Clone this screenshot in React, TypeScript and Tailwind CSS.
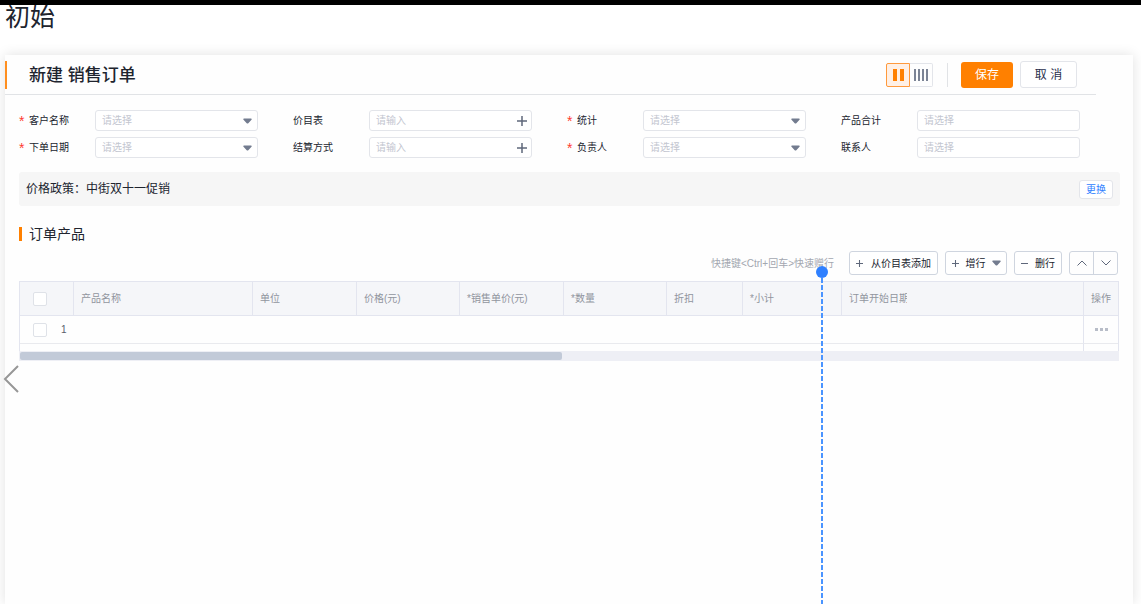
import { useState } from "react";

type Field = {
  id: string;
  label: string;
  required?: boolean;
  kind: "select" | "lookup" | "text";
  placeholder: string;
};

type Column = {
  key: string;
  title: string;
  width: string;
  clip?: boolean;
};

const fields: Field[] = [
  { id: "customer", label: "客户名称", required: true, kind: "select", placeholder: "请选择" },
  { id: "priceList", label: "价目表", kind: "lookup", placeholder: "请输入" },
  { id: "stats", label: "统计", required: true, kind: "select", placeholder: "请选择" },
  { id: "total", label: "产品合计", kind: "text", placeholder: "请选择" },
  { id: "orderDate", label: "下单日期", required: true, kind: "select", placeholder: "请选择" },
  { id: "settlement", label: "结算方式", kind: "lookup", placeholder: "请输入" },
  { id: "owner", label: "负责人", required: true, kind: "select", placeholder: "请选择" },
  { id: "contact", label: "联系人", kind: "text", placeholder: "请选择" },
];

const columns: Column[] = [
  { key: "name", title: "产品名称", width: "w-[179px]" },
  { key: "unit", title: "单位", width: "w-[104px]" },
  { key: "price", title: "价格(元)", width: "w-[103px]" },
  { key: "salePrice", title: "*销售单价(元)", width: "w-[104px]" },
  { key: "quantity", title: "*数量", width: "w-[103px]" },
  { key: "discount", title: "折扣", width: "w-[76px]" },
  { key: "subtotal", title: "*小计", width: "w-[99px]" },
  { key: "startDate", title: "订单开始日期", width: "w-auto", clip: true },
];

function Caret({ className }: { className?: string }) {
  return (
    <svg viewBox="0 0 9 6" className={`h-[6px] w-[9px] fill-[#737c8f] ${className ?? ""}`} aria-hidden="true">
      <path d="M1 .5h7c.7 0 1 .8.5 1.300L5.300 5.200a1.100 1.100 0 0 1-1.600 0L.5 1.800C0 1.300.3.5 1 .5z" />
    </svg>
  );
}

function Plus({ className }: { className?: string }) {
  return (
    <svg viewBox="0 0 10 10" className={className} fill="none" stroke="#5f687b" aria-hidden="true">
      <path d="M5 0v10M0 5h10" strokeWidth="1.500" />
    </svg>
  );
}

function FormField({ field }: { field: Field }) {
  const control =
    "block h-[21px] w-full appearance-none rounded-[3px] border border-[#e3e5ea] bg-white px-1.5 text-[10px] leading-[19px] outline-none placeholder:text-[#c3c6d0]";

  return (
    <div className="flex items-center pr-[35px]">
      <label htmlFor={field.id} className="flex w-[76px] shrink-0 items-center text-[10px] leading-[14px] text-[#20242e]">
        {field.required ? (
          <span className="w-[10px] text-[14px] leading-[10px] text-[#ff3b30]">*</span>
        ) : null}
        {field.label}
      </label>
      <div className="relative min-w-0 flex-1">
        {field.kind === "select" ? (
          <>
            <select id={field.id} defaultValue="" className={`${control} text-[#c3c6d0]`}>
              <option value="">{field.placeholder}</option>
            </select>
            <Caret className="pointer-events-none absolute top-2 right-1.5" />
          </>
        ) : (
          <input id={field.id} placeholder={field.placeholder} className={`${control} text-[#2a304d]`} />
        )}
        {field.kind === "lookup" ? (
          <button
            type="button"
            aria-label={`选择${field.label}`}
            className="absolute top-[5px] right-[5px] flex size-[11px] items-center justify-center"
          >
            <Plus className="size-[10px]" />
          </button>
        ) : null}
      </div>
    </div>
  );
}

function Toolbar() {
  const button =
    "flex h-6 items-center rounded-[3px] border border-[#cfd5df] bg-white text-[10px] text-[#20242e]";

  return (
    <div className="flex items-center justify-end gap-[7px] pr-[2px]">
      <span className="mr-2 text-[10px] text-[#a3a7b0]">快捷键&lt;Ctrl+回车&gt;快速赠行</span>
      <button className={`${button} w-[89px] justify-between px-1.5`}>
        <Plus className="size-[7px]" />
        从价目表添加
      </button>
      <button className={`${button} w-[62px] justify-between pr-[5px] pl-1.5`}>
        <Plus className="size-[7px]" />
        增行
        <Caret />
      </button>
      <button className={`${button} w-[48px] justify-between px-1.5`}>
        <span className="h-px w-[7px] bg-[#5f687b]" />
        删行
      </button>
      <div className="flex h-6 w-[49px] divide-x divide-[#cfd5df] rounded-[3px] border border-[#cfd5df]">
        <button aria-label="上移" className="flex flex-1 items-center justify-center">
          <svg viewBox="0 0 10 6" className="h-[6px] w-[10px]" fill="none" stroke="#5f687b">
            <path d="M.5 5.500 5 1l4.500 4.500" />
          </svg>
        </button>
        <button aria-label="下移" className="flex flex-1 items-center justify-center">
          <svg viewBox="0 0 10 6" className="h-[6px] w-[10px]" fill="none" stroke="#5f687b">
            <path d="M.5.5 5 5 9.500.5" />
          </svg>
        </button>
      </div>
    </div>
  );
}

function CheckBox({ label }: { label: string }) {
  return (
    <input
      type="checkbox"
      aria-label={label}
      className="block size-[14px] appearance-none rounded-[2px] border border-[#dfe2e8] bg-white checked:bg-[#ff8000]"
    />
  );
}

function ProductTable() {
  return (
    <div className="mt-1.5 mr-[1px]">
      <table className="w-full table-fixed border-separate border-spacing-0 border-x border-[#e3e5ef] text-left text-[10px]">
        <thead>
          <tr className="h-[35px] bg-[#f5f6f9] text-[#91959e]">
            <th className="w-[54px] border-y border-r border-[#e3e5ef] pl-[13px]">
              <CheckBox label="全选" />
            </th>
            {columns.map((col) => (
              <th key={col.key} className={`${col.width} border-y border-r border-[#e3e5ef] px-[7px] font-normal`}>
                <span className={col.clip ? "block w-[58px] overflow-hidden whitespace-nowrap" : "block whitespace-nowrap"}>
                  {col.title}
                </span>
              </th>
            ))}
            <th className="w-[34px] border-y border-[#e3e5ef] text-center font-normal">操作</th>
          </tr>
        </thead>
        <tbody>
          <tr className="h-[28px]">
            <td className="border-b border-[#e9eaee] pl-[13px] text-[#5a5f6b]">
              <div className="flex items-center gap-[14px]">
                <CheckBox label="选择第 1 行" />1
              </div>
            </td>
            {columns.map((col) => (
              <td
                key={col.key}
                className={`border-b border-[#e9eaee] ${col.key === "startDate" ? "border-r border-r-[#e3e5ef]" : ""}`}
              />
            ))}
            <td className="border-b border-[#e9eaee]">
              <button aria-label="更多操作" className="mx-auto flex gap-[2px]">
                <span className="size-[3px] bg-[#b8bdc8]" />
                <span className="size-[3px] bg-[#b8bdc8]" />
                <span className="size-[3px] bg-[#b8bdc8]" />
              </button>
            </td>
          </tr>
          <tr className="h-[7px]">
            <td colSpan={columns.length + 1} className="border-r border-[#e3e5ef]" />
            <td />
          </tr>
        </tbody>
      </table>
      <div className="h-[10px] bg-[#eeeff5] px-px py-[1px]">
        <div className="h-2 w-[49.400%] rounded-[2px] bg-[#c2cad8]" />
      </div>
    </div>
  );
}

export default function App() {
  const [layout, setLayout] = useState<"wide" | "dense">("wide");

  return (
    <div className="relative flex min-h-screen flex-col overflow-hidden border-t-[5px] border-black bg-white font-['Liberation_Sans','Noto_Sans_CJK_SC',sans-serif]">
      <h1 className="h-[50px] pl-[5px] text-[25px] leading-[24px] text-[#20242e]">初始</h1>

      <main className="relative mr-2 ml-[5px] flex-1 bg-[#fefefe] shadow-[0_0_12px_rgba(0,0,0,0.12)]">
        <header className="mr-[37px] flex h-10 items-center border-b border-[#e1e3e6] pr-[19px]">
          <div className="h-7 w-[2px] bg-[#ff8f1f]" />
          <h2 className="ml-[22px] flex-1 pt-[2px] text-[17px] font-medium text-[#20242e]">新建 销售订单</h2>
          <div className="flex h-6">
            <button
              aria-label="宽松布局"
              aria-pressed={layout === "wide"}
              onClick={() => setLayout("wide")}
              className="flex w-6 items-center justify-center gap-[3px] rounded-l-[2px] border border-[#ff9a3d] bg-[#fff0e5]"
            >
              <span className="h-3 w-1 bg-[#ff8000]" />
              <span className="h-3 w-1 bg-[#ff8000]" />
            </button>
            <button
              aria-label="紧凑布局"
              aria-pressed={layout === "dense"}
              onClick={() => setLayout("dense")}
              className="flex w-[23px] items-center justify-center gap-[2px] rounded-r-[2px] border border-l-0 border-[#e3e5ea]"
            >
              <span className="h-3 w-[2px] bg-[#7c8495]" />
              <span className="h-3 w-[2px] bg-[#7c8495]" />
              <span className="h-3 w-[2px] bg-[#7c8495]" />
              <span className="h-3 w-[2px] bg-[#7c8495]" />
            </button>
          </div>
          <div className="mr-[13px] ml-[14px] h-6 w-px bg-[#e1e3e6]" />
          <button className="h-[26px] w-[52px] rounded-[3px] bg-[#ff8000] text-[12px] text-white">保存</button>
          <button className="ml-[7px] h-[27px] w-[57px] rounded-[3px] border border-[#e3e5ea] bg-white text-[12px] text-[#2a304d]">
            取 消
          </button>
        </header>

        <form className="mt-[15px] mr-[18px] ml-[14px] grid grid-cols-4 gap-y-1.5">
          {fields.map((field) => (
            <FormField key={field.id} field={field} />
          ))}
        </form>

        <section className="mt-[14px] mr-[13px] ml-[14px] flex h-[34px] items-center justify-between rounded-[3px] bg-[#f6f6f6] px-[7px]">
          <p className="text-[12px] text-[#20242e]">价格政策：中街双十一促销</p>
          <button className="h-[19px] w-[34px] rounded-[3px] border border-[#e3e5ea] bg-white text-[10px] leading-[17px] text-[#2f80ff]">
            更换
          </button>
        </section>

        <section className="mr-[13px] ml-[14px] pt-[18px]">
          <h3 className="mb-[7px] flex h-5 items-center gap-[7px] text-[14px] text-[#20242e]">
            <span className="h-[14px] w-[3px] bg-[#ff8000]" />
            订单产品
          </h3>
          <Toolbar />
          <ProductTable />
        </section>

        {/* annotation guide hanging from the shortcut hint */}
        <div className="pointer-events-none absolute top-[211px] bottom-0 left-[811px] flex w-3 flex-col items-center">
          <span className="size-3 shrink-0 rounded-full bg-[#2f80ff]" />
          <span className="w-[2px] flex-1 bg-[repeating-linear-gradient(to_bottom,#4a94ff_0_5px,transparent_5px_7px)]" />
        </div>
      </main>

      <button aria-label="上一张" className="absolute top-[360px] left-[3px]">
        <svg viewBox="0 0 16 28" className="h-7 w-4" fill="none" stroke="#979797" strokeWidth="2">
          <path d="M15 1 2 14l13 13" />
        </svg>
      </button>
    </div>
  );
}
